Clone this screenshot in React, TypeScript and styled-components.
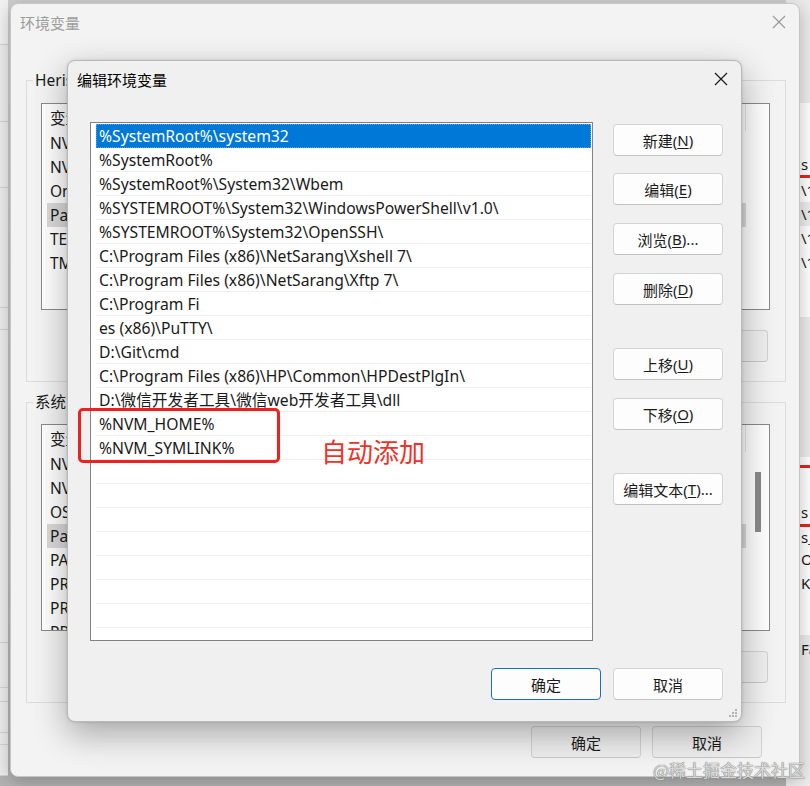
import React from 'react';
import styled, { createGlobalStyle } from 'styled-components';

const GlobalStyle = createGlobalStyle`
  html, body {
    margin: 0;
    padding: 0;
  }
  body {
    width: 810px;
    height: 786px;
    overflow: hidden;
    font-family: "Noto Sans", "Noto Sans CJK SC", sans-serif;
  }
`;

const Desktop = styled.div`
  position: relative;
  width: 810px;
  height: 786px;
  overflow: hidden;
  background: linear-gradient(#cfcfcf, #b2b2b2);
`;

/* windows peeking out behind the main one */
const LeftBackWindow = styled.div`
  position: absolute;
  left: -200px;
  top: 0;
  width: 208px;
  height: 776px;
  background: #ececec;
  display: flex;
  flex-direction: column;
`;

const StripRow = styled.div<{ $h: number; $bg?: string }>`
  height: ${(p) => p.$h}px;
  flex-shrink: 0;
  box-sizing: border-box;
  border-bottom: 1px solid #d2d2d2;
  background: ${(p) => p.$bg || 'transparent'};
`;

const RightBackWindow = styled.div`
  position: absolute;
  left: 786px;
  top: 0;
  width: 80px;
  height: 786px;
  background: #ececec;
  display: flex;
  flex-direction: column;
  font-size: 15px;
  color: #1a1a1a;
`;

const BackPanel = styled.div<{ $h: number; $bg?: string }>`
  height: ${(p) => p.$h}px;
  flex-shrink: 0;
  background: ${(p) => p.$bg || '#ffffff'};
  display: flex;
  flex-direction: column;
  overflow: hidden;
`;

const BackRow = styled.div<{ $h?: number; $sel?: boolean }>`
  height: ${(p) => p.$h ?? 24}px;
  flex-shrink: 0;
  line-height: ${(p) => p.$h ?? 24}px;
  padding-left: 15px;
  background: ${(p) => (p.$sel ? '#ececec' : 'transparent')};
  white-space: nowrap;
`;

const RedRule = styled.div<{ $mt?: number }>`
  height: 3px;
  flex-shrink: 0;
  margin-top: ${(p) => p.$mt ?? 0}px;
  background: #e8231c;
  margin-left: 14px;
`;

/* outer "环境变量" window (inactive) */
const OuterWindow = styled.div`
  position: absolute;
  left: 10px;
  top: 3px;
  width: 790px;
  height: 774px;
  box-sizing: border-box;
  background: #f3f3f3;
  border: 1px solid #c6c6c6;
  border-radius: 8px;
  box-shadow: 0 4px 18px rgba(0, 0, 0, 0.25);
  display: flex;
  flex-direction: column;
  overflow: hidden;
`;

const TitleBar = styled.div<{ $inactive?: boolean }>`
  height: 36px;
  flex-shrink: 0;
  display: flex;
  align-items: center;
  justify-content: space-between;
  padding: 0 13px 0 9px;
  font-size: 15px;
  color: ${(p) => (p.$inactive ? '#9c9c9c' : '#000000')};
`;

const OuterBody = styled.div`
  flex: 1;
  display: flex;
  flex-direction: column;
  padding: 0 13px 0 15px;
`;

const GroupBox = styled.div<{ $mt: number; $pt: number }>`
  position: relative;
  margin-top: ${(p) => p.$mt}px;
  border: 1px solid #dcdcdc;
  padding: ${(p) => p.$pt}px 15px 19px 14px;
  display: flex;
  flex-direction: column;
`;

const Legend = styled.div`
  position: absolute;
  top: -12px;
  left: 6px;
  padding: 0 2px;
  background: #f3f3f3;
  font-size: 15.5px;
  line-height: 22px;
  color: #1a1a1a;
  white-space: nowrap;
`;

const VarList = styled.div`
  position: relative;
  height: 207px;
  box-sizing: border-box;
  border: 1px solid #8a8a8a;
  background: #ffffff;
  padding: 0 1px 0 5px;
  overflow: hidden;
  font-size: 15.5px;
  color: #1a1a1a;
`;

const VarHeader = styled.div`
  width: 699px;
  height: 27px;
  box-sizing: border-box;
  display: grid;
  grid-template-columns: 230px 1fr;
  align-items: center;
  padding-left: 3px;
  border-right: 1px solid #e5e5e5;
`;

const VarRow = styled.div<{ $sel?: boolean }>`
  width: 699px;
  height: 24px;
  display: grid;
  grid-template-columns: 230px 1fr;
  align-items: center;
  padding-left: 3px;
  box-sizing: border-box;
  background: ${(p) => (p.$sel ? '#dadada' : 'transparent')};
  white-space: nowrap;
`;

const ScrollThumb = styled.div`
  position: absolute;
  right: 8px;
  top: 47px;
  width: 6px;
  height: 60px;
  background: #8b8b8b;
`;

const ButtonRow = styled.div<{ $mt: number; $pr?: number; $gap?: number }>`
  display: flex;
  justify-content: flex-end;
  gap: ${(p) => p.$gap ?? 12}px;
  margin-top: ${(p) => p.$mt}px;
  padding-right: ${(p) => p.$pr ?? 0}px;
`;

const WinButton = styled.div<{ $mt?: number; $primary?: boolean; $dim?: boolean }>`
  width: 110px;
  height: 32px;
  flex-shrink: 0;
  box-sizing: border-box;
  margin-top: ${(p) => p.$mt ?? 0}px;
  display: flex;
  align-items: center;
  justify-content: center;
  border-radius: 4px;
  border: 1px solid ${(p) => (p.$primary ? '#1a6fc4' : p.$dim ? '#d2d2d2' : '#d3d3d3')};
  border-bottom-color: ${(p) => (p.$primary ? '#1a6fc4' : p.$dim ? '#c8c8c8' : '#c2c2c2')};
  background: ${(p) => (p.$dim ? '#efefef' : '#fdfdfd')};
  font-size: 15px;
  color: #1b1b1b;
  white-space: nowrap;

  u {
    text-underline-offset: 2px;
  }
`;

/* inner "编辑环境变量" dialog (active) */
const Dialog = styled.div`
  position: absolute;
  left: 67px;
  top: 60px;
  width: 675px;
  height: 662px;
  box-sizing: border-box;
  background: #f0f0f0;
  border: 1px solid #b9b9b9;
  border-radius: 8px;
  box-shadow: 0 12px 34px rgba(0, 0, 0, 0.32), 0 0 3px rgba(0, 0, 0, 0.15);
  display: flex;
  flex-direction: column;
`;

const DialogBody = styled.div`
  display: grid;
  grid-template-columns: 503px 110px;
  column-gap: 20px;
  padding: 25px 18px 0 22px;
`;

const PathList = styled.div`
  height: 519px;
  box-sizing: border-box;
  border: 1px solid #828282;
  background: #ffffff;
  padding: 1px 1px 0 5px;
  overflow: hidden;
`;

const PathRow = styled.div<{ $sel?: boolean }>`
  height: 24px;
  box-sizing: border-box;
  padding-left: 3px;
  line-height: 24px;
  font-size: 15.7px;
  white-space: nowrap;
  color: ${(p) => (p.$sel ? '#ffffff' : '#1a1a1a')};
  background: ${(p) => (p.$sel ? '#0078d7' : 'transparent')};
  border-bottom: 1px solid ${(p) => (p.$sel ? '#0078d7' : '#efefef')};
  outline: ${(p) => (p.$sel ? '1px dotted #5aa4e6' : 'none')};
  outline-offset: -1px;
`;

const SideButtons = styled.div`
  display: flex;
  flex-direction: column;
`;

const Grip = styled.svg`
  position: absolute;
  right: 3px;
  bottom: 3px;
`;

const Annotation = styled.div`
  position: absolute;
  left: 78px;
  top: 408px;
  width: 202px;
  height: 55px;
  box-sizing: border-box;
  border: 3px solid #ee2020;
  border-radius: 5px;
`;

const AnnotationText = styled.div`
  position: absolute;
  left: 321px;
  top: 434px;
  font-size: 26px;
  line-height: 34px;
  color: #ee3228;
  font-family: "Noto Sans CJK SC", sans-serif;
`;

const Watermark = styled.div`
  position: absolute;
  right: 5px;
  top: 759px;
  font-size: 17px;
  line-height: 22px;
  color: #d9d9d9;
  text-shadow: 0 0 1px #7a7a7a, 0 0 1px #7a7a7a;
  font-family: "Noto Sans CJK SC", sans-serif;
`;

const CloseIcon = ({ color }: { color: string }) => (
  <svg width="14" height="14" viewBox="0 0 14 14">
    <path d="M1 1 L13 13 M13 1 L1 13" stroke={color} strokeWidth="1.2" fill="none" />
  </svg>
);

const paths = [
  '%SystemRoot%\\system32',
  '%SystemRoot%',
  '%SystemRoot%\\System32\\Wbem',
  '%SYSTEMROOT%\\System32\\WindowsPowerShell\\v1.0\\',
  '%SYSTEMROOT%\\System32\\OpenSSH\\',
  'C:\\Program Files (x86)\\NetSarang\\Xshell 7\\',
  'C:\\Program Files (x86)\\NetSarang\\Xftp 7\\',
  'C:\\Program Fi',
  'es (x86)\\PuTTY\\',
  'D:\\Git\\cmd',
  'C:\\Program Files (x86)\\HP\\Common\\HPDestPlgIn\\',
  'D:\\微信开发者工具\\微信web开发者工具\\dll',
  '%NVM_HOME%',
  '%NVM_SYMLINK%',
];

const userVars = [
  ['NVM_HOME', 'D:\\nvm'],
  ['NVM_SYMLINK', 'D:\\nodejs'],
  ['OneDrive', 'C:\\Users\\Heris\\OneDrive'],
  ['Path', 'C:\\Users\\Heris\\AppData\\Local\\Microsoft\\WindowsApps'],
  ['TEMP', 'C:\\Users\\Heris\\AppData\\Local\\Temp'],
  ['TMP', 'C:\\Users\\Heris\\AppData\\Local\\Temp'],
];

const sysVars = [
  ['NVM_HOME', 'D:\\nvm'],
  ['NVM_SYMLINK', 'D:\\nodejs'],
  ['OS', 'Windows_NT'],
  ['Path', 'C:\\Windows\\system32'],
  ['PATHEXT', '.COM;.EXE;.BAT;.CMD'],
  ['PROCESSOR_ARCHITECTURE', 'AMD64'],
  ['PROCESSOR_IDENTIFIER', 'Intel64 Family 6'],
  ['PROCESSOR_LEVEL', '6'],
];

const VarTable = ({ rows, sel, thumb }: { rows: string[][]; sel: number; thumb?: boolean }) => (
  <VarList>
    <VarHeader>
      <span>变量</span>
      <span>值</span>
    </VarHeader>
    {rows.map(([k, v], i) => (
      <VarRow key={k} $sel={i === sel}>
        <span>{k}</span>
        <span>{v}</span>
      </VarRow>
    ))}
    {thumb && <ScrollThumb />}
  </VarList>
);

export default function App() {
  const emptyRows = Array.from({ length: 8 });
  return (
    <Desktop>
      <GlobalStyle />

      <LeftBackWindow>
        <StripRow $h={45} $bg="#f2f2f2" />
        <StripRow $h={77} />
        <StripRow $h={66} />
        <StripRow $h={120} />
        <StripRow $h={22} />
        <StripRow $h={313} />
        <StripRow $h={45} />
        <StripRow $h={14} />
        <StripRow $h={31} />
        <StripRow $h={12} />
        <StripRow $h={31} />
      </LeftBackWindow>

      <RightBackWindow>
        <BackPanel $h={103} $bg="#ececec" />
        <BackPanel $h={214}>
          <BackRow $h={50} />
          <BackRow $h={22}>s</BackRow>
          <RedRule />
          <BackRow>\1</BackRow>
          <BackRow $sel>\1</BackRow>
          <BackRow>\1</BackRow>
          <BackRow>\1</BackRow>
        </BackPanel>
        <BackPanel $h={140} $bg="#ececec" />
        <BackPanel $h={178}>
          <RedRule $mt={8} />
          <BackRow $h={32} />
          <BackRow $h={24}>s</BackRow>
          <RedRule />
          <BackRow $h={20}>s_</BackRow>
          <BackRow>O</BackRow>
          <BackRow>KE</BackRow>
        </BackPanel>
        <BackPanel $h={28} $bg="#ececec">
          <BackRow $h={28}>Fa</BackRow>
        </BackPanel>
      </RightBackWindow>

      <OuterWindow>
        <TitleBar $inactive>
          <span>环境变量</span>
          <CloseIcon color="#9a9a9a" />
        </TitleBar>
        <OuterBody>
          <GroupBox $mt={40} $pt={22}>
            <Legend>Heris 的用户变量(U)</Legend>
            <VarTable rows={userVars} sel={3} />
            <ButtonRow $mt={20} $pr={2} $gap={11}>
              <WinButton $dim>新建(N)...</WinButton>
              <WinButton $dim>编辑(E)...</WinButton>
              <WinButton $dim>删除(D)</WinButton>
            </ButtonRow>
          </GroupBox>
          <GroupBox $mt={20} $pt={21}>
            <Legend>系统变量(S)</Legend>
            <VarTable rows={sysVars} sel={3} thumb />
            <ButtonRow $mt={20} $pr={2} $gap={11}>
              <WinButton $dim>新建(W)...</WinButton>
              <WinButton $dim>编辑(I)...</WinButton>
              <WinButton $dim>删除(L)</WinButton>
            </ButtonRow>
          </GroupBox>
          <ButtonRow $mt={23} $pr={24} $gap={11}>
            <WinButton $dim>确定</WinButton>
            <WinButton $dim>取消</WinButton>
          </ButtonRow>
        </OuterBody>
      </OuterWindow>

      <Dialog>
        <TitleBar>
          <span>编辑环境变量</span>
          <CloseIcon color="#1a1a1a" />
        </TitleBar>
        <DialogBody>
          <PathList>
            {paths.map((p, i) => (
              <PathRow key={i} $sel={i === 0}>
                {p}
              </PathRow>
            ))}
            {emptyRows.map((_, i) => (
              <PathRow key={'e' + i} />
            ))}
          </PathList>
          <SideButtons>
            <WinButton $mt={2}>新建(<u>N</u>)</WinButton>
            <WinButton $mt={17}>编辑(<u>E</u>)</WinButton>
            <WinButton $mt={18}>浏览(<u>B</u>)...</WinButton>
            <WinButton $mt={18}>删除(<u>D</u>)</WinButton>
            <WinButton $mt={43}>上移(<u>U</u>)</WinButton>
            <WinButton $mt={18}>下移(<u>O</u>)</WinButton>
            <WinButton $mt={43}>编辑文本(<u>T</u>)...</WinButton>
          </SideButtons>
        </DialogBody>
        <ButtonRow $mt={27} $pr={18} $gap={12}>
          <WinButton $primary>确定</WinButton>
          <WinButton>取消</WinButton>
        </ButtonRow>
        <Grip width="10" height="10" viewBox="0 0 10 10">
          {[
            [8, 2],
            [5, 5],
            [8, 5],
            [2, 8],
            [5, 8],
            [8, 8],
          ].map(([x, y], i) => (
            <rect key={i} x={x - 1} y={y - 1} width="2" height="2" fill="#b4b4b4" />
          ))}
        </Grip>
      </Dialog>

      <Annotation />
      <AnnotationText>自动添加</AnnotationText>
      <Watermark>@稀土掘金技术社区</Watermark>
    </Desktop>
  );
}
